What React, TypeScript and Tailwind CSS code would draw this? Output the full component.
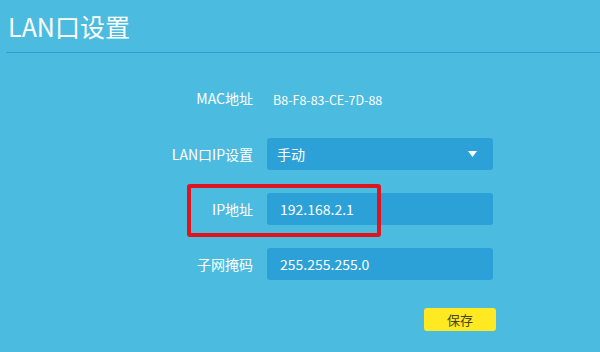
const font = { fontFamily: '"Microsoft YaHei", "Noto Sans CJK SC", "Noto Sans", sans-serif' };

function Row({ label, children, className = "" }: { label: string; children: React.ReactNode; className?: string }) {
  return (
    <div className={"relative flex items-center h-8 " + className}>
      <div className="w-[253px] text-right text-[14px] text-white">{label}</div>
      <div className="ml-[14px] w-[226px]">{children}</div>
    </div>
  );
}

function Field({ value }: { value: string }) {
  return (
    <div className="h-8 w-full rounded-[3px] bg-[#2ba1d7] pl-[13px] flex items-center text-[14px] text-white">
      {value}
    </div>
  );
}

export default function App() {
  return (
    <div className="w-[600px] h-[352px] bg-[#4bbce0] overflow-hidden" style={font}>
      <div className="ml-[6px] h-[53px] border-b border-[#2c9fd0] pl-[2px] pt-[10px]">
        <h1 className="text-[25px] leading-[32px] text-white">LAN口设置</h1>
      </div>

      <div className="flex flex-col">
        <Row label="MAC地址" className="mt-[29px]">
          <span className="pl-[6px] text-[12.5px] text-white">B8-F8-83-CE-7D-88</span>
        </Row>

        <Row label="LAN口IP设置" className="mt-[24px]">
          <div className="h-8 w-full rounded-[3px] bg-[#2ba1d7] pl-[10px] pr-[16px] flex items-center justify-between text-[14px] text-white">
            <span>手动</span>
            <svg width="9" height="6" viewBox="0 0 9 6">
              <path d="M0 0 H9 L4.5 6 Z" fill="#ffffff" />
            </svg>
          </div>
        </Row>

        <Row label="IP地址" className="mt-[23px]">
          <Field value="192.168.2.1" />
          <div className="absolute left-[187px] top-[-9px] w-[194px] h-[53px] border-4 border-[#e0141c] rounded-[3px]" />
        </Row>

        <Row label="子网掩码" className="mt-[23px]">
          <Field value="255.255.255.0" />
        </Row>

        <div className="flex mt-[28px] pl-[424px]">
          <button className="w-[72px] h-[23px] rounded-[3px] bg-[#ffe923] text-[13px] text-[#4a4418]">保存</button>
        </div>
      </div>
    </div>
  );
}
